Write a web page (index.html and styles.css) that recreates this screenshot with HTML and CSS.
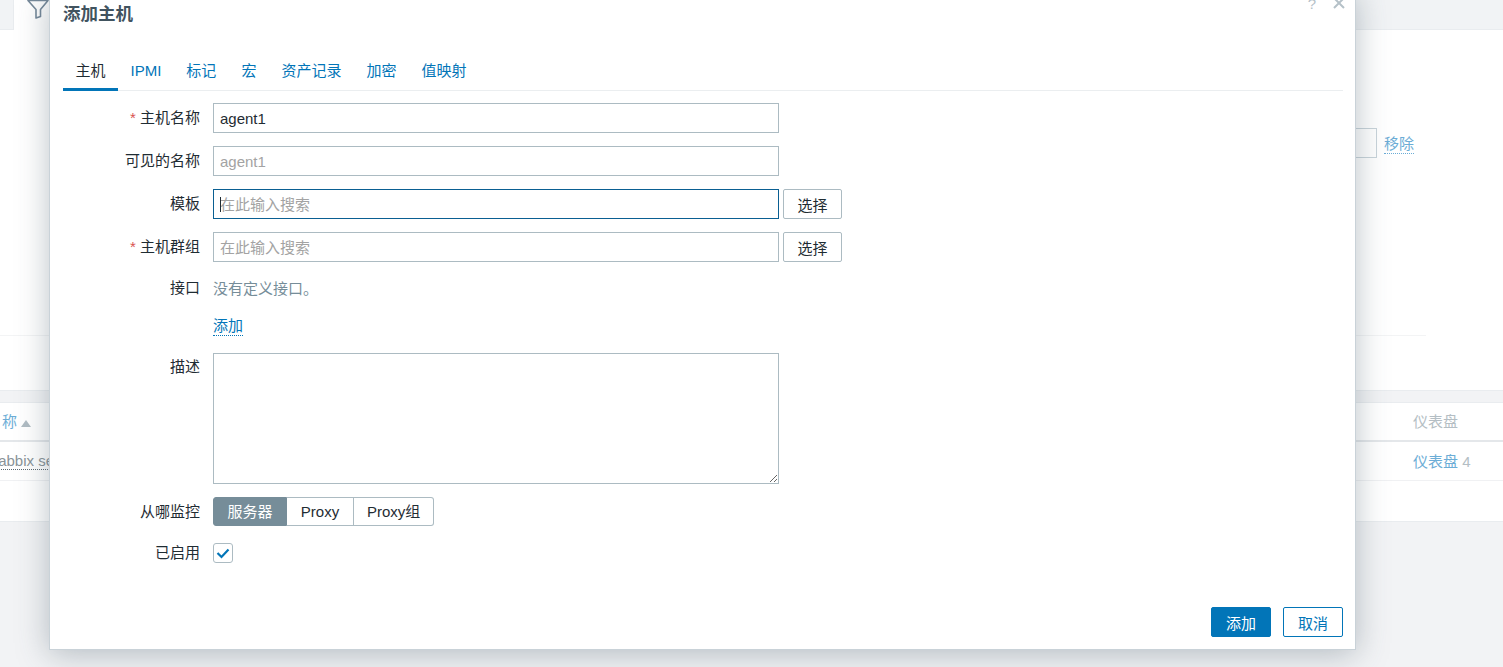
FILE: index.html
```html
<!DOCTYPE html>
<html lang="zh-CN">
<head>
    <meta charset="UTF-8">
    <meta name="viewport" content="width=device-width, initial-scale=1.0">
    <title>添加主机</title>
    <link rel="stylesheet" href="styles.css">
</head>
<body>
    <!-- page behind the dialog -->
    <div class="page">
        <div class="filter-strip">
            <div class="filter-tab">
                <svg class="filter-icon" width="22" height="20" viewBox="0 0 22 20">
                    <path d="M1 1.5 H21 L13.5 10.5 V17.5 L9 19 V10.5 Z" fill="none" stroke="#76899a" stroke-width="1.6" stroke-linejoin="round"/>
                </svg>
            </div>
        </div>
        <div class="filter-panel">
            <div class="filter-row">
                <div class="filter-box"></div>
                <a class="dotted faded-link">移除</a>
            </div>
            <div class="filter-line"></div>
        </div>
        <div class="list-panel">
            <div class="list-head">
                <div class="cell-name">称 <span class="sort-up"></span></div>
                <div class="cell-dash">仪表盘</div>
            </div>
            <div class="list-row">
                <div class="cell-host"><span class="host-link">Zabbix server</span></div>
                <div class="cell-dash"><span class="faded-link">仪表盘</span> 4</div>
            </div>
        </div>
    </div>

    <div class="dialog">
        <div class="dialog-head">
            <h4>添加主机</h4>
            <div class="dialog-icons">
                <span class="help">?</span>
                <svg width="12" height="12" viewBox="0 0 12 12">
                    <path d="M1 1 L11 11 M11 1 L1 11" stroke="#b5c1c8" stroke-width="2"/>
                </svg>
            </div>
        </div>

        <ul class="tabs">
            <li class="active">主机</li>
            <li>IPMI</li>
            <li>标记</li>
            <li>宏</li>
            <li>资产记录</li>
            <li>加密</li>
            <li>值映射</li>
        </ul>

        <div class="form">
            <label><span class="req">*</span> 主机名称</label>
            <div class="field"><input class="text-input" type="text" value="agent1"></div>

            <label>可见的名称</label>
            <div class="field"><input class="text-input" type="text" placeholder="agent1"></div>

            <label>模板</label>
            <div class="field">
                <div class="caret-wrap">
                    <input class="text-input focused" type="text" placeholder="在此输入搜索">
                    <span class="caret"></span>
                </div>
                <button class="btn-alt">选择</button>
            </div>

            <label><span class="req">*</span> 主机群组</label>
            <div class="field">
                <input class="text-input" type="text" placeholder="在此输入搜索">
                <button class="btn-alt">选择</button>
            </div>

            <label>接口</label>
            <div class="field row-note">没有定义接口。</div>

            <label></label>
            <div class="field row-add"><a class="dotted link">添加</a></div>

            <label class="label-top">描述</label>
            <div class="field"><textarea class="text-area"></textarea></div>

            <label>从哪监控</label>
            <div class="field">
                <div class="segments">
                    <span class="seg seg-on">服务器</span>
                    <span class="seg">Proxy</span>
                    <span class="seg">Proxy组</span>
                </div>
            </div>

            <label class="label-check">已启用</label>
            <div class="field row-check">
                <span class="check">
                    <svg width="14" height="12" viewBox="0 0 14 12">
                        <path d="M1.5 6 L5.5 10 L12.5 2.5" fill="none" stroke="#0275b8" stroke-width="2.2"/>
                    </svg>
                </span>
            </div>
        </div>

        <div class="dialog-foot">
            <button class="btn-main">添加</button>
            <button class="btn-cancel">取消</button>
        </div>
    </div>
</body>
</html>
```

FILE: styles.css
```css
* {
    box-sizing: border-box;
}
html, body {
    height: 100%;
}
body {
    margin: 0;
    overflow: hidden;
    position: relative;
    background-color: #f2f3f5;
    font-family: "Liberation Sans", "Noto Sans CJK SC", sans-serif;
    font-size: 15px;
    color: #1f2c33;
}

/* background page */
.filter-strip {
    height: 31px;
    padding-left: 13px;
    background-color: #f1f3f5;
    border-bottom: 1px solid #e9ecef;
}
.filter-tab {
    width: 300px;
    height: 31px;
    padding-left: 13px;
    background-color: #fff;
    border-left: 1px solid #e9ecef;
}
.filter-icon {
    display: block;
    margin-top: -1px;
}
.filter-panel {
    height: 361px;
    padding: 98px 77px 0 0;
    background-color: #fff;
    border-bottom: 1px solid #e9ecef;
}
.filter-row {
    display: flex;
    justify-content: flex-end;
    align-items: center;
    gap: 7px;
}
.filter-box {
    width: 100px;
    height: 30px;
    border: 1px solid #c9d4da;
}
.faded-link {
    color: #6cadd6;
}
.filter-row .faded-link {
    margin-top: 2px;
    margin-right: 12px;
}
.filter-line {
    height: 1px;
    margin-top: 177px;
    background-color: #f3f4f5;
}
.list-panel {
    height: 120px;
    margin-top: 11px;
    background-color: #fff;
    border-top: 1px solid #e9ecef;
    border-bottom: 1px solid #e9ecef;
}
.list-head {
    display: flex;
    justify-content: space-between;
    align-items: center;
    height: 39px;
    padding-bottom: 2px;
    border-bottom: 2px solid #e4e7ea;
    color: #b4bec4;
}
.cell-name {
    padding-left: 2px;
    color: #6cadd6;
}
.sort-up {
    display: inline-block;
    width: 0;
    height: 0;
    border-left: 5px solid transparent;
    border-right: 5px solid transparent;
    border-bottom: 7px solid #b0bcc3;
}
.cell-dash {
    width: 90px;
    color: #b4bec4;
}
.list-row {
    display: flex;
    justify-content: space-between;
    align-items: center;
    height: 39px;
    padding-bottom: 1px;
    border-bottom: 1px solid #f0f1f3;
}
.cell-host {
    margin-left: -11px;
}
.host-link {
    color: #8a9499;
    border-bottom: 1px dotted #5d6a72;
}

/* dialog */
.dialog {
    position: absolute;
    top: -10px;
    left: 49px;
    width: 1307px;
    height: 660px;
    display: flex;
    flex-direction: column;
    padding: 0 12px 12px 13px;
    background-color: #fff;
    border: 1px solid #c9d2d8;
    box-shadow: 0 4px 30px rgba(60, 80, 95, 0.35);
}
.dialog-head {
    display: flex;
    justify-content: space-between;
    height: 45px;
}
.dialog-head h4 {
    margin: 13px 0 0;
    font-size: 17.5px;
    line-height: 20px;
    font-weight: bold;
    color: #41535f;
}
.dialog-icons {
    display: flex;
    align-items: flex-start;
    gap: 17px;
    margin-right: -2px;
    padding-top: 6px;
    color: #b5c1c8;
}
.help {
    font-size: 15px;
    line-height: 14px;
}
.tabs {
    display: flex;
    height: 55px;
    margin: 0;
    padding: 21px 0 0;
    list-style: none;
    border-bottom: 1px solid #ebeef0;
    color: #0275b8;
}
.tabs li {
    height: 34px;
    padding: 0 12.5px;
    line-height: 28px;
}
.tabs .active {
    color: #1f2c33;
    border-bottom: 3px solid #0275b8;
}
.form {
    display: grid;
    grid-template-columns: 137px 1fr;
    column-gap: 13px;
    row-gap: 13px;
    margin-top: 12px;
}
.form label {
    align-self: center;
    text-align: right;
    line-height: 20px;
}
.form .label-top {
    align-self: start;
    padding-top: 4px;
}
.req {
    color: #d9534f;
}
.field {
    display: flex;
    align-items: center;
    gap: 4px;
}
.text-input {
    width: 566px;
    height: 30px;
    padding: 0 6px;
    font: inherit;
    color: #1f2c33;
    background-color: #fff;
    border: 1px solid #acbbc2;
    border-radius: 0;
    outline: none;
}
.text-input::placeholder {
    color: #a3a3a3;
    opacity: 1;
}
.text-input.focused {
    border-color: #0a5f92;
}
.caret-wrap {
    position: relative;
    display: flex;
}
.caret {
    position: absolute;
    top: 8px;
    left: 7px;
    width: 1px;
    height: 15px;
    background-color: #1f2c33;
}
.btn-alt {
    width: 59px;
    height: 30px;
    padding: 0;
    font: inherit;
    color: #1f2c33;
    background-color: #fff;
    border: 1px solid #acbbc2;
    border-radius: 2px;
}
.row-note {
    height: 25px;
    color: #768d99;
}
.row-add {
    height: 27px;
    padding-bottom: 2px;
}
.link {
    color: #0275b8;
}
.dotted {
    border-bottom: 1px dotted currentColor;
    line-height: 19px;
}
.text-area {
    display: block;
    width: 566px;
    height: 131px;
    border: 1px solid #acbbc2;
    border-radius: 0;
    outline: none;
}
.segments {
    display: flex;
    height: 29px;
}
.seg {
    min-width: 67px;
    padding: 0 13px;
    line-height: 27px;
    text-align: center;
    background-color: #fff;
    border: 1px solid #acbbc2;
    border-left: 0;
}
.seg:last-child {
    border-radius: 0 3px 3px 0;
}
.seg-on {
    width: 74px;
    color: #fff;
    background-color: #768d99;
    border: 1px solid #768d99;
    border-radius: 3px 0 0 3px;
}
.row-check {
    height: 20px;
    margin-top: 4px;
}
.label-check {
    margin-top: 4px;
}
.check {
    display: flex;
    align-items: center;
    justify-content: center;
    width: 20px;
    height: 20px;
    border: 1px solid #acbbc2;
    border-radius: 3px;
}
.dialog-foot {
    display: flex;
    justify-content: flex-end;
    gap: 12px;
    margin-top: auto;
}
.btn-main,
.btn-cancel {
    width: 60px;
    height: 30px;
    padding: 0;
    font: inherit;
    border: 1px solid #0275b8;
    border-radius: 2px;
}
.btn-main {
    color: #fff;
    background-color: #0275b8;
}
.btn-cancel {
    color: #0275b8;
    background-color: #fff;
}
```
